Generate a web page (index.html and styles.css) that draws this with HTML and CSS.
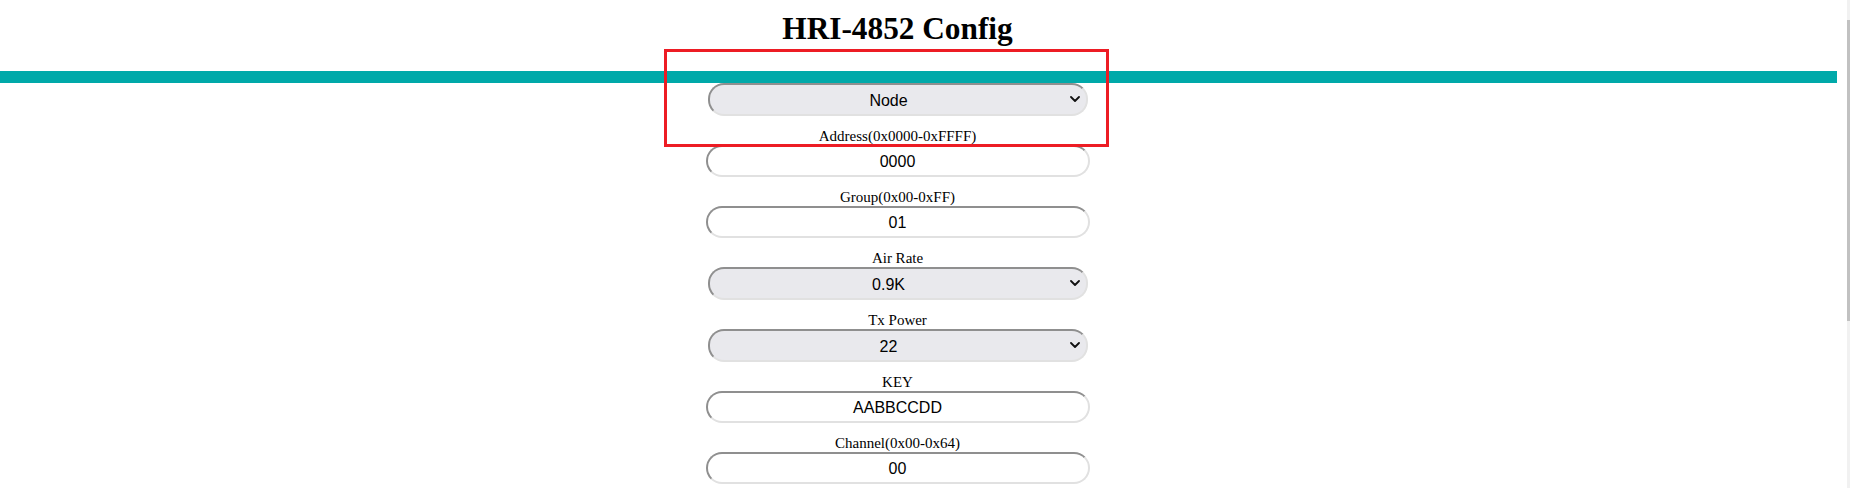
FILE: index.html
```html
<!DOCTYPE html>
<html lang="en">
<head>
<meta charset="utf-8">
<title>HRI-4852 Config</title>
<link rel="stylesheet" href="styles.css">
</head>
<body>
<div class="screen">
  <main class="page">
    <h1 class="title">HRI-4852 Config</h1>
    <div class="rule"></div>
    <form class="form">
      <div class="select-wrap">
        <select class="control select"><option>Node</option></select>
        <svg class="chevron" width="10" height="6" viewBox="0 0 10 6"><polyline points="1,1 5,5 9,1" fill="none" stroke="#111" stroke-width="1.8" stroke-linecap="round" stroke-linejoin="round"/></svg>
      </div>
      <div class="field">
        <label class="label">Address(0x0000-0xFFFF)</label>
        <input class="control input" type="text" value="0000">
      </div>
      <div class="field">
        <label class="label">Group(0x00-0xFF)</label>
        <input class="control input" type="text" value="01">
      </div>
      <div class="field">
        <label class="label">Air Rate</label>
        <div class="select-wrap">
          <select class="control select"><option>0.9K</option></select>
          <svg class="chevron" width="10" height="6" viewBox="0 0 10 6"><polyline points="1,1 5,5 9,1" fill="none" stroke="#111" stroke-width="1.8" stroke-linecap="round" stroke-linejoin="round"/></svg>
        </div>
      </div>
      <div class="field">
        <label class="label">Tx Power</label>
        <div class="select-wrap">
          <select class="control select"><option>22</option></select>
          <svg class="chevron" width="10" height="6" viewBox="0 0 10 6"><polyline points="1,1 5,5 9,1" fill="none" stroke="#111" stroke-width="1.8" stroke-linecap="round" stroke-linejoin="round"/></svg>
        </div>
      </div>
      <div class="field">
        <label class="label">KEY</label>
        <input class="control input" type="text" value="AABBCCDD">
      </div>
      <div class="field">
        <label class="label">Channel(0x00-0x64)</label>
        <input class="control input" type="text" value="00">
      </div>
    </form>
    <div class="annotation"></div>
  </main>
  <div class="scrollbar">
    <div class="track-top"></div>
    <div class="thumb"></div>
    <div class="track-bottom"></div>
  </div>
</div>
</body>
</html>
```

FILE: styles.css
```css
html, body {
  margin: 0;
  padding: 0;
  background: #ffffff;
}

body {
  width: 1850px;
  height: 488px;
  overflow: hidden;
  font-family: "Liberation Serif", "Times New Roman", serif;
  color: #000;
}

.screen {
  display: flex;
  width: 1850px;
  height: 488px;
}

.page {
  position: relative;
  width: 1837px;
  height: 488px;
  flex: none;
}

.title {
  margin: 0;
  padding-top: 10px;
  width: 1795px;
  text-align: center;
  font-family: "Liberation Serif", "Times New Roman", serif;
  font-weight: 700;
  font-size: 31.3px;
  line-height: 37px;
}

.rule {
  margin-top: 24px;
  height: 12px;
  width: 1837px;
  background: #00a9a9;
}

.form {
  width: 1795px;
  display: flex;
  flex-direction: column;
  align-items: center;
  gap: 12px;
  margin: 0;
}

.field {
  display: flex;
  flex-direction: column;
  align-items: center;
}

.label {
  display: block;
  font-family: "Liberation Serif", "Times New Roman", serif;
  font-size: 15px;
  line-height: 17px;
  height: 17px;
  color: #000;
}

.control {
  box-sizing: border-box;
  margin: 0;
  border-style: solid;
  border-width: 2px;
  border-top-color: #8f8f8f;
  border-left-color: #8f8f8f;
  border-bottom-color: #e1e1e1;
  border-right-color: #e1e1e1;
  border-radius: 16px;
  font-family: "Liberation Sans", Arial, sans-serif;
  font-size: 16px;
  color: #000;
  outline: none;
}

.input {
  width: 384px;
  height: 32px;
  padding: 2px 4px 0 4px;
  background: #ffffff;
  text-align: center;
}

.select-wrap {
  position: relative;
  width: 380px;
  height: 33px;
}

.select {
  -webkit-appearance: none;
  appearance: none;
  width: 380px;
  height: 33px;
  padding: 2px 18px 0 0;
  background: #e9e9ed;
  text-align: center;
  text-align-last: center;
}

.chevron {
  position: absolute;
  right: 8px;
  top: 13px;
  pointer-events: none;
}

.annotation {
  position: absolute;
  left: 664px;
  top: 49px;
  width: 445px;
  height: 98px;
  box-sizing: border-box;
  border: 3px solid #ed1c24;
  pointer-events: none;
}

.scrollbar {
  margin-left: 10px;
  width: 3px;
  height: 488px;
  display: flex;
  flex-direction: column;
}

.track-top {
  height: 20px;
  background: #f1f1f1;
}

.thumb {
  height: 301px;
  background: #c1c1c1;
}

.track-bottom {
  flex: 1;
  background: #f1f1f1;
}
```
